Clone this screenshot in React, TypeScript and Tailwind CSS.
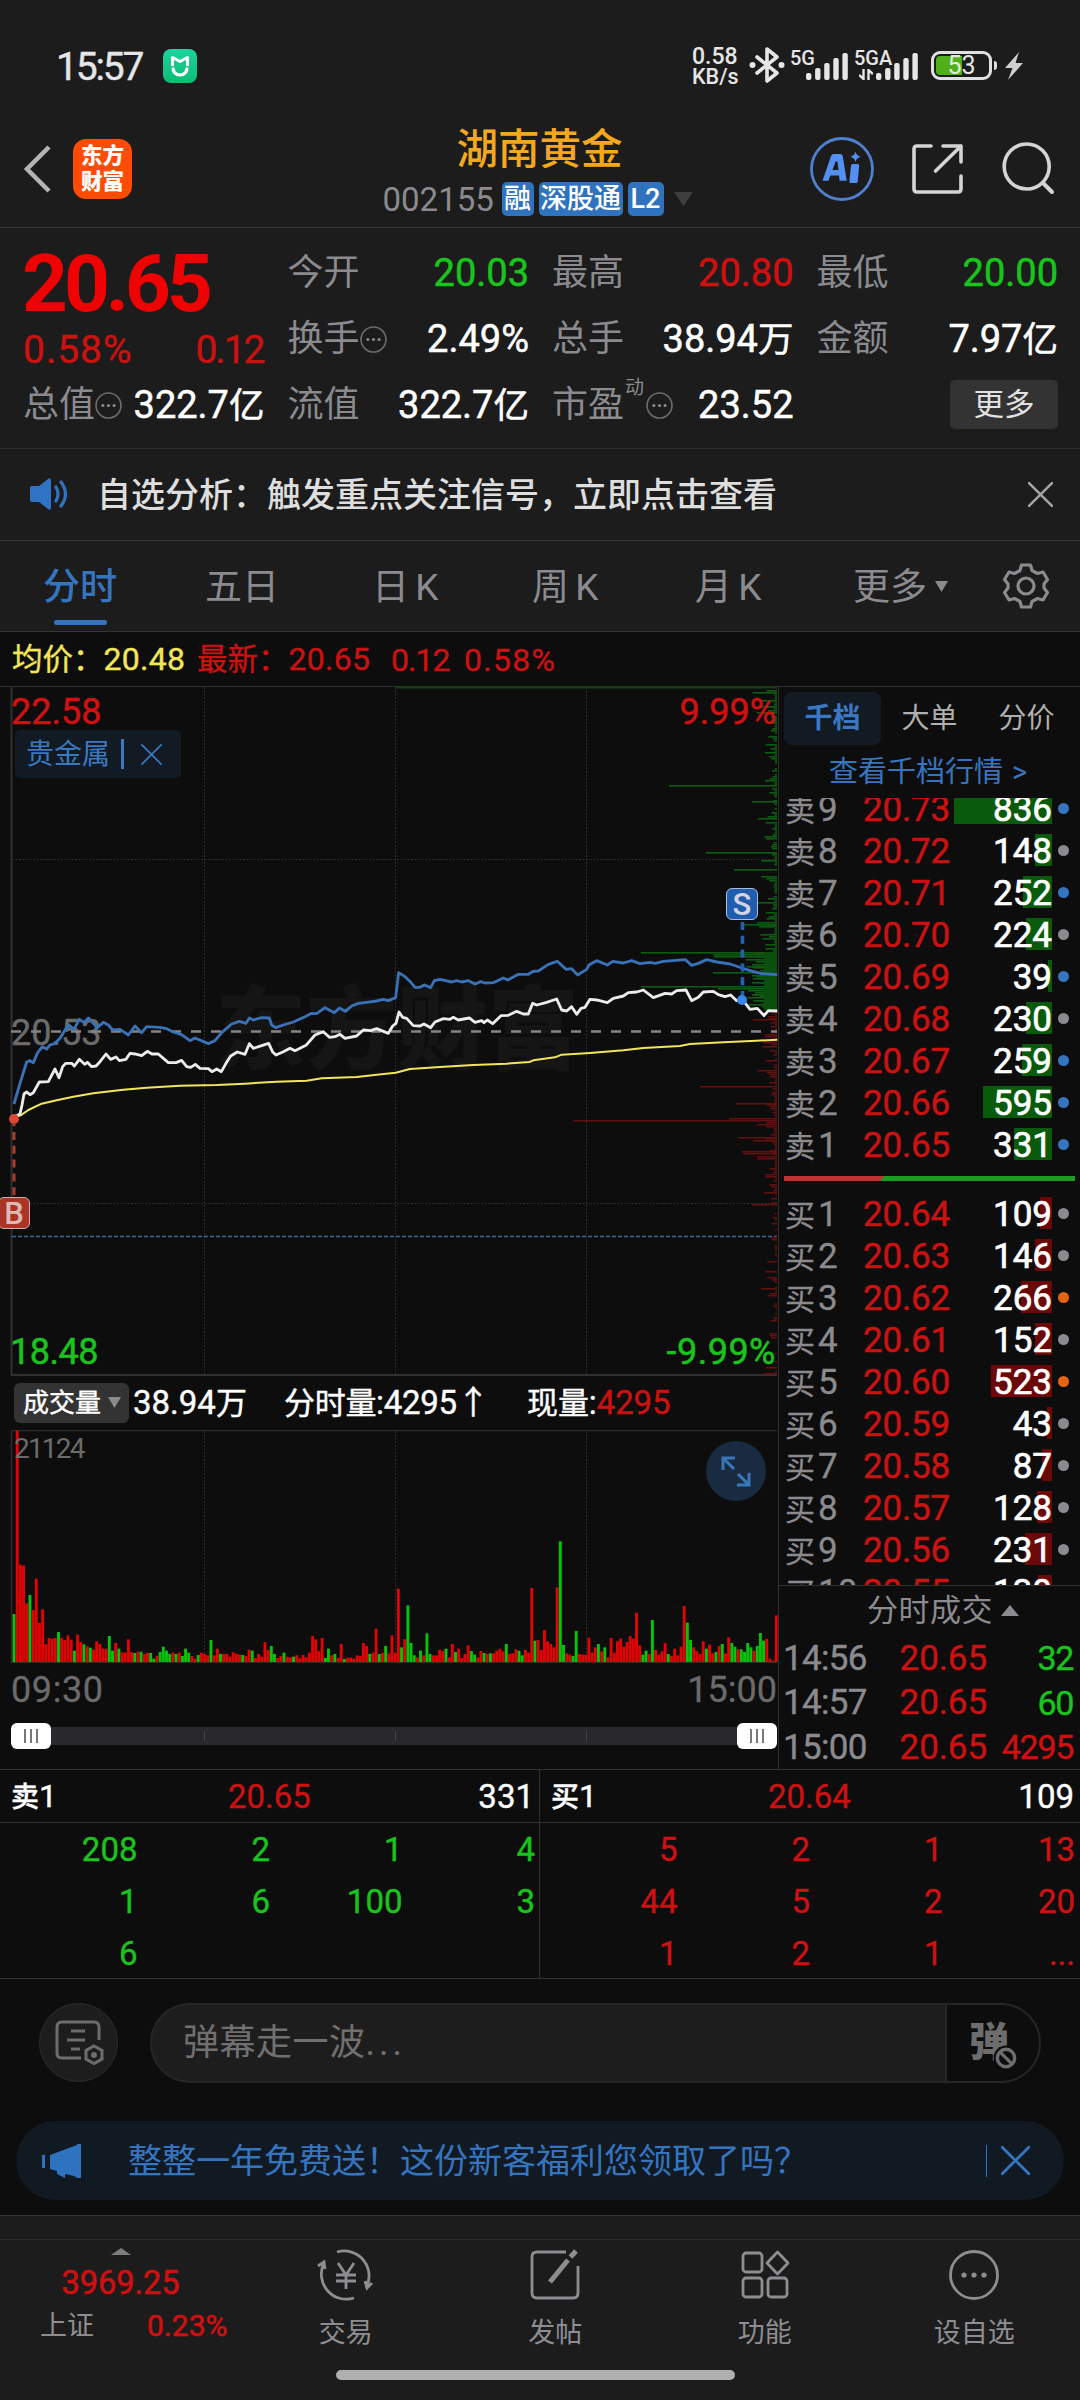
import React from "react";

const RED = "#d01010";
const GREEN = "#19c41c";
const BLUE = "#3575c0";

/* ---------- price chart data (thirds of a pixel, y from 920) ---------- */
const priceLine =
  "42,592 60,582 66,555 72,522 80,516 90,524 100,518 118,486 145,485 165,447 177,473 188,440 197,430 215,430 223,438 238,418 254,433 262,427 275,440 288,438 300,425 318,402 332,418 348,411 358,422 378,418 390,400 405,402 425,407 442,394 456,402 475,402 505,428 528,428 545,421 560,440 572,442 586,433 600,445 625,446 636,455 650,447 664,455 678,430 692,408 712,396 735,403 748,371 760,385 785,377 806,370 818,396 828,405 850,395 870,385 885,392 918,376 945,345 970,335 988,352 1005,350 1020,343 1035,355 1070,348 1090,330 1112,332 1130,326 1165,340 1178,318 1188,310 1197,276 1208,292 1220,295 1240,317 1260,318 1272,312 1292,323 1305,306 1330,296 1350,298 1360,292 1375,300 1408,294 1425,307 1445,302 1452,308 1462,300 1478,311 1503,287 1525,286 1550,274 1570,282 1585,282 1598,250 1610,255 1640,247 1670,237 1685,270 1700,273 1715,260 1730,283 1743,265 1755,262 1770,238 1790,240 1822,248 1840,235 1870,228 1885,218 1910,216 1930,210 1960,233 1995,220 2015,222 2030,212 2058,210 2075,242 2095,232 2110,216 2140,214 2155,224 2175,230 2192,225 2210,242 2226,242 2236,250 2250,268 2272,265 2292,287 2305,272 2332,273";
const sectorLine =
  "42,552 60,490 80,426 90,422 100,428 113,398 127,380 140,387 150,375 165,370 180,355 192,335 207,315 222,328 238,298 252,308 265,294 280,310 292,323 310,307 325,315 338,330 360,328 385,345 405,318 425,338 440,320 480,322 500,326 520,336 545,344 570,362 585,354 625,371 645,362 665,338 695,312 718,304 738,310 748,294 760,300 785,293 808,294 815,315 827,323 850,315 880,306 915,290 935,280 950,281 975,263 1003,278 1018,264 1036,274 1055,258 1075,250 1100,247 1130,243 1150,238 1165,242 1187,233 1196,158 1215,170 1228,182 1245,202 1260,202 1273,195 1292,203 1303,182 1320,178 1355,186 1370,182 1385,186 1405,182 1425,192 1442,185 1455,189 1480,188 1510,174 1523,180 1555,163 1585,163 1600,154 1615,153 1645,133 1672,124 1698,148 1715,146 1733,165 1760,148 1767,135 1790,122 1822,135 1838,124 1870,129 1895,122 1920,131 1950,127 1965,130 1990,124 2056,119 2075,136 2095,130 2120,119 2150,126 2190,132 2226,144 2250,152 2285,161 2332,164";
const averageLine =
  "42,592 62,586 85,570 125,551 170,541 220,530 280,520 370,509 440,503 540,497 650,495 735,491 830,485 920,482 965,475 1070,471 1130,464 1187,458 1230,447 1320,441 1420,435 1520,431 1588,426 1600,421 1665,412 1685,404 1770,399 1870,391 1930,384 2040,378 2070,372 2170,367 2270,362 2332,359";

/* order depth: [y, left edge] of the prominent levels */
const askDepth: [number, number][] = [
  [785, 669], [801, 752], [818, 758], [852, 706], [869, 734], [902, 758], [924, 742],
  [952, 641], [954, 713], [956, 714], [959, 746], [961, 756], [964, 752], [967, 753], [970, 760], [972, 713],
  [975, 752], [978, 753], [982, 752], [986, 641], [988, 718], [990, 748], [992, 755], [994, 752], [997, 747], [1000, 757], [1003, 763], [1006, 766],
];
const bidDepth: [number, number][] = [
  [1019, 753], [1070, 758], [1086, 700], [1103, 736], [1118, 729], [1120, 574], [1137, 738],
  [1140, 753], [1151, 742], [1153, 743], [1174, 765], [1204, 752], [1271, 765], [1288, 761], [1320, 770], [1367, 766], [1373, 764],
];

/* deterministic small depth ticks between two y values */
function ticks(from: number, to: number, seed: number, density: number, max: number): [number, number][] {
  const out: [number, number][] = [];
  let s = seed;
  for (let y = from; y < to; y += 2) {
    s = (s * 9301 + 49297) % 233280;
    const r = s / 233280;
    if (r < density) out.push([y, 775 - Math.pow(r / density, 3) * max]);
  }
  return out;
}
const askTicks = [
  ...ticks(690, 720, 11, 0.95, 26),
  ...ticks(720, 890, 7, 0.75, 14),
  ...ticks(890, 950, 3, 0.9, 18),
  ...ticks(950, 1010, 5, 1, 30),
];
const bidTicks = [
  ...ticks(1012, 1100, 9, 0.9, 14),
  ...ticks(1100, 1160, 4, 1, 22),
  ...ticks(1160, 1205, 21, 0.9, 12),
  ...ticks(1205, 1374, 13, 0.4, 8),
];

/* per-minute volume, third-pixel heights; a leading minus marks a falling minute */
const volumes = [
  -144, 694, 292, 289, 176, -201, 156, 250, 117, 158, 53, 72, 70, 72, -90, 73, 66, 80, 67, -34, 82, 60, -53, 47, -43, 37, 62, 54, 40, 40,
  -78, -34, 57, -40, 29, 28, 68, 30, -27, 31, -31, 24, 28, -27, -10, 18, -30, -46, -34, -24, 28, -24, 28, -18, -40, -28, 18, 10, -21, 28,
  24, 20, -66, 20, 40, -24, 24, 24, 16, 29, 25, 22, -21, 18, 37, -34, 12, 24, 16, 59, 36, -48, -24, 12, 18, -28, 16, 14, -16, 20,
  12, 21, 14, 28, 78, 68, 33, 72, -12, -40, 20, -24, 12, 54, -9, 13, 13, 10, 20, 18, 57, 48, -24, 28, 100, -24, 28, -48, 26, 80,
  28, 220, -44, 68, -170, -57, -20, 14, -34, 20, -86, -24, 20, 20, 37, 33, -40, 14, 54, -30, 40, 12, 24, 50, -33, -22, 14, 33, -27, 24,
  -26, 26, 34, 40, 32, -54, 24, 26, 38, -34, -20, 36, 28, 222, -64, 66, 36, 96, 62, 54, 44, 224, -362, -51, 26, 22, -18, -93, 24, 22,
  22, 73, 28, 44, -54, 32, -44, 14, 72, 28, 62, 70, 46, 60, 78, 70, 148, 50, -22, -34, 24, -126, 37, 22, 32, 57, -24, 18, 40, 20,
  46, 168, -118, -66, 44, 32, 24, 62, -40, 52, 26, -30, 48, -54, 26, 74, -57, -46, 38, -38, -30, -57, -44, 34, -48, -87, -64, 70, 10, 4, 140,
];

const gridX = [204.5, 395.5, 586.5];

/* ---------- small icons ---------- */
function Info() {
  return (
    <svg width="27" height="27" viewBox="0 0 26 26" className="shrink-0">
      <circle cx="13" cy="13" r="12" fill="none" stroke="#6a6a6d" strokeWidth="1.600" />
      <circle cx="7.600" cy="13" r="1.500" fill="#8b8b8f" />
      <circle cx="13" cy="13" r="1.500" fill="#8b8b8f" />
      <circle cx="18.400" cy="13" r="1.500" fill="#8b8b8f" />
    </svg>
  );
}

function Cross({ size, color, w }: { size: number; color: string; w: number }) {
  return (
    <svg width={size} height={size} viewBox="0 0 24 24">
      <path d="M1 1 23 23M23 1 1 23" stroke={color} strokeWidth={w} fill="none" strokeLinecap="round" />
    </svg>
  );
}

function Signal() {
  return (
    <svg width="42" height="27" viewBox="0 0 42 27">
      {[7, 12, 17, 22, 27].map((h, i) => (
        <rect key={h} x={i * 9.1} y={27 - h} width="5.400" height={h} rx="2" fill="#e6e6e6" />
      ))}
    </svg>
  );
}

/* ---------- sections ---------- */
function StatusBar() {
  return (
    <div className="flex h-[120px] items-start pl-[56px] pr-[57px] pt-[45px] text-[#e6e6e6]">
      <div className="flex h-[44px] w-[107px] items-center text-[39px] leading-[44px] tracking-[-2.200px] [-webkit-text-stroke:0.4px]">15:57</div>
      <svg width="34" height="34" viewBox="0 0 34 34" className="mt-1">
        <defs>
          <linearGradient id="mi" x1="0" y1="0" x2="0" y2="1">
            <stop offset="0" stopColor="#1ed2a0" />
            <stop offset="1" stopColor="#0cbd72" />
          </linearGradient>
        </defs>
        <rect width="34" height="34" rx="8" fill="url(#mi)" />
        <path d="M9.500 17V8.500L17 12.500 24.500 8.500V17" fill="none" stroke="#fff" strokeWidth="3" strokeLinejoin="round" />
        <path d="M9.800 18.500Q10.500 26 17 26T24.200 18.500" fill="none" stroke="#fff" strokeWidth="3" />
      </svg>
      <div className="grow" />
      <div className="flex w-[57px] flex-col pt-[2px] font-medium leading-[20px]">
        <span className="text-[23px]">0.58</span>
        <span className="text-[21.500px]">KB/s</span>
      </div>
      <svg width="36" height="38" viewBox="0 0 36 38" className="mt-px">
        <path d="M8 11 28 27 18 35V3L28 11 8 27" fill="none" stroke="#e6e6e6" strokeWidth="3.600" strokeLinejoin="round" strokeLinecap="round" />
        <circle cx="3.500" cy="19" r="3" fill="#e6e6e6" />
        <circle cx="32.500" cy="19" r="3" fill="#e6e6e6" />
      </svg>
      <div className="relative ml-[21px] mt-[8px]">
        <Signal />
        <span className="absolute -left-[16px] -top-[5px] text-[20px] font-medium leading-[20px]">5G</span>
      </div>
      <div className="relative ml-[28px] mt-[8px]">
        <Signal />
        <span className="absolute -left-[22px] -top-[5px] h-[18px] bg-[#1c1c1c] text-[20px] font-medium leading-[20px]">5GA</span>
        <svg width="14" height="11" viewBox="0 0 14 11" className="absolute -left-[17px] top-[16px]">
          <path d="M4.500 0V10L0 6M9.500 11V1L14 5" fill="none" stroke="#e6e6e6" strokeWidth="2.400" />
        </svg>
      </div>
      <div className="relative ml-[13px] mt-[6px] h-[29px] w-[61px] rounded-[9px] border-3 border-[#e0e0e0] p-[2px]">
        <div className="h-full w-[26px] rounded-l-[4px] bg-[#4fb01a]" />
        <span className="absolute inset-0 text-center text-[25px] leading-[24px]">53</span>
      </div>
      <div className="ml-[2px] mt-[16px] h-[9px] w-[3px] rounded-r bg-[#e0e0e0]" />
      <svg width="18" height="28" viewBox="0 0 18 28" className="ml-[8px] mt-[7px]">
        <path d="M14 0 0 16H7.500L3 28 18 11H10.500Z" fill="#cfcfcf" />
      </svg>
    </div>
  );
}

function Header() {
  const badge = "flex h-[34px] items-center justify-center rounded-[5px] bg-[#2f72bd] text-[27px] leading-none font-medium text-white";
  return (
    <div className="relative flex h-[108px] items-start border-b border-[#353535] px-[23px]">
      <svg width="30" height="50" viewBox="0 0 30 50" className="mt-[24px]">
        <path d="M26 3 4 25 26 47" fill="none" stroke="#b4b4b4" strokeWidth="4.500" />
      </svg>
      <div className="ml-[20px] mt-[19px] flex h-[60px] w-[59px] shrink-0 flex-col items-center justify-center rounded-[13px] bg-[#ff4c00] text-[21.500px] font-black leading-[26px] text-white">
        <span>东方</span>
        <span>财富</span>
      </div>
      <div className="flex grow flex-col items-center pl-[137px]">
        <div className="mt-[2px] h-[56px] text-center text-[41.500px] leading-[56px] font-medium whitespace-nowrap text-[#f5a81c]">湖南黄金</div>
        <div className="mt-[4px] flex h-[34px] items-center pr-[4px]">
          <span className="w-[119px] pt-[2px] text-[33px] leading-[34px] text-[#8b8b8f]">002155</span>
          <span className={badge + " w-[32px]"}>融</span>
          <span className={badge + " ml-[5px] w-[84px]"}>深股通</span>
          <span className={badge + " ml-[5px] w-[36px]"}>L2</span>
          <svg width="19" height="14" viewBox="0 0 19 14" className="ml-[10px]">
            <path d="M0 0H19L9.500 14Z" fill="#3e3e3e" />
          </svg>
        </div>
      </div>
      <svg width="64" height="64" viewBox="0 0 64 64" className="mt-[17px] shrink-0">
        <circle cx="32" cy="32" r="30.500" fill="none" stroke="#4e80cf" strokeWidth="2.800" />
        <g fill="#5390f2">
          <path fillRule="evenodd" d="M12.500 43.700 21 19Q22 17 24 17H30.500Q32.300 17 32.700 19L36.700 43.700H29.600L29 38.500H20.300L18.500 43.700ZM22.500 33H28.500L27.500 24.500H25.500Z" />
          <path d="M41 28.500Q41.200 27 42.600 27H47.500Q49.300 27 49.200 28.500L47.700 44.500Q47.500 46 46 46H41Q39.200 46 39.400 44.500Z" />
          <path d="M45.500 14.500Q46.500 18.700 50.700 19.700 46.500 20.700 45.500 25 44.500 20.700 40.300 19.700 44.500 18.700 45.500 14.500Z" />
        </g>
      </svg>
      <svg width="54" height="54" viewBox="0 0 54 54" className="ml-[37px] mt-[22px] shrink-0">
        <path d="M20 4H6Q3 4 3 7V47Q3 50 6 50H47Q50 50 50 47V34M32 4H50V20M50 4 24.500 29" fill="none" stroke="#d4d4d4" strokeWidth="3.600" strokeLinecap="round" strokeLinejoin="round" />
      </svg>
      <svg width="56" height="56" viewBox="0 0 56 56" className="ml-[36px] mt-[21px] shrink-0">
        <circle cx="25.700" cy="25.500" r="22.500" fill="none" stroke="#d4d4d4" strokeWidth="3.600" />
        <path d="M42 42 51 51" stroke="#d4d4d4" strokeWidth="4" strokeLinecap="round" />
      </svg>
    </div>
  );
}

function Stat({ label, value, color, icon, sup }: { label: string; value: string; color: string; icon?: boolean; sup?: string }) {
  return (
    <div className="flex h-[66px] items-center justify-between whitespace-nowrap">
      <span className="flex items-center text-[36px] text-[#8b8b8f]">
        {label}
        {sup && <span className="relative -top-[17px] ml-[1px] mr-[2px] text-[19px]">{sup}</span>}
        {icon && <Info />}
      </span>
      <span className="-mr-px text-[38px] leading-none [-webkit-text-stroke:0.5px]" style={{ color }}>
        {/[亿万]$/.test(value) ? (
          <>
            {value.slice(0, -1)}
            <span className="text-[35.500px]">{value.slice(-1)}</span>
          </>
        ) : (
          value
        )}
      </span>
    </div>
  );
}

function Quote() {
  return (
    <div className="grid h-[221px] grid-cols-4 gap-x-[24px] border-b border-[#303030] pl-[23px] pr-[23px] pt-[12px]">
      <div>
        <div className="-ml-[1px] h-[88px] text-[80px] leading-[88px] font-bold tracking-[-4px] text-[#ee0202]">20.65</div>
        <div className="mb-[-1px] flex h-[45px] items-center justify-between text-[39px] leading-none text-[#cc1111] [-webkit-text-stroke:0.4px]">
          <span className="tracking-[1px]">0.58%</span>
          <span className="tracking-[-2px]">0.12</span>
        </div>
        <Stat label="总值" icon value="322.7亿" color="#fff" />
      </div>
      <div>
        <Stat label="今开" value="20.03" color={GREEN} />
        <Stat label="换手" icon value="2.49%" color="#fff" />
        <Stat label="流值" value="322.7亿" color="#fff" />
      </div>
      <div>
        <Stat label="最高" value="20.80" color={RED} />
        <Stat label="总手" value="38.94万" color="#fff" />
        <Stat label="市盈" sup="动" icon value="23.52" color="#fff" />
      </div>
      <div>
        <Stat label="最低" value="20.00" color={GREEN} />
        <Stat label="金额" value="7.97亿" color="#fff" />
        <div className="-mr-px flex h-[66px] items-center justify-end">
          <div className="mb-px flex h-[49px] w-[108px] items-center justify-center rounded-[5px] bg-[#333333] text-[30.500px] text-[#e2e2e2]">更多</div>
        </div>
      </div>
    </div>
  );
}

function Notice() {
  return (
    <div className="flex h-[92px] items-center border-b border-[#353535] pl-[29px] pr-[27px]">
      <svg width="42" height="34" viewBox="0 0 42 34" className="-mt-[2px]">
        <path d="M3 9H10L19 2Q22 0 22 4V30Q22 34 19 32L10 25H3Q1 25 1 23V11Q1 9 3 9Z" fill="#2f74c4" />
        <path d="M27 10Q31 17 27 24M32 5Q41 17 32 29" fill="none" stroke="#2f74c4" strokeWidth="3.200" strokeLinecap="round" />
      </svg>
      <span className="ml-[26px] grow text-[34px] leading-[50px] font-medium text-[#dedede]">自选分析：触发重点关注信号，立即点击查看</span>
      <Cross size={25} color="#a5a5a5" w={2.4} />
    </div>
  );
}

function Tabs() {
  return (
    <div className="relative flex h-[91px] items-center border-b border-[#353535] text-[37px] leading-[88px] text-[#8b8b8f]">
      <div className="relative ml-[43px] w-[162px] pt-[3px] font-medium text-[#3575c0]">
        分时
        <div className="absolute bottom-[7px] left-[11px] h-[5px] w-[53px] rounded-full bg-[#3575c0]" />
      </div>
      <div className="w-[167px] pt-[3px]">五日</div>
      <div className="w-[160px] pt-[3px] [word-spacing:-3px]">日 K</div>
      <div className="w-[163px] pt-[3px] [word-spacing:-3px]">周 K</div>
      <div className="w-[158px] pt-[3px] [word-spacing:-3px]">月 K</div>
      <div className="flex w-[149px] items-center pt-[3px]">
        更多
        <svg width="13" height="11" viewBox="0 0 13 11" className="-mt-[2px] ml-[8px]">
          <path d="M0 0H13L6.500 11Z" fill="#8b8b8f" />
        </svg>
      </div>
      <svg width="48" height="48" viewBox="0 0 48 48" fill="none" stroke="#8b8b8f" strokeWidth="3.200" strokeLinejoin="round">
        <path d="M19.500 3H28.500L30 8.500 35.500 11.500 41 10 45.500 17.500 42 22V26L45.500 30.500 41 38 35.500 36.500 30 39.500 28.500 45H19.500L18 39.500 12.500 36.500 7 38 2.500 30.500 6 26V22L2.500 17.500 7 10 12.500 11.500 18 8.500Z" />
        <circle cx="24" cy="24" r="8" />
      </svg>
    </div>
  );
}

function PriceChart() {
  const label = "absolute text-[36px] leading-[40px] [-webkit-text-stroke:0.5px]";
  return (
    <div className="relative h-[689px]">
      <svg width="778" height="690" viewBox="0 686 778 690" className="absolute -top-px left-0">
        <path d="M11.500 686V1375.500M11 1375H777" stroke="#303030" strokeWidth="2" fill="none" />
        {gridX.map((x) => (
          <path key={x} d={`M${x} 687V1374`} stroke="#2e2e2e" strokeDasharray="2 1.500" />
        ))}
        <path d="M12 859.500H777M12 1203.500H777" stroke="#2e2e2e" strokeDasharray="2 1.500" />
        <path d="M12 1236.500H777" stroke="#3b668f" strokeWidth="1.500" strokeDasharray="4 2" />
        <path d="M395 687.500H777" stroke="#173d17" strokeWidth="2" />
        {[...askTicks, ...askDepth].map(([y, x], i) => (
          <rect key={i} x={x} y={y} width={777 - x} height="1.600" fill="#0e5c11" />
        ))}
        <rect x="764" y="952" width="13" height="58" fill="#0a500c" />
        {[...bidTicks, ...bidDepth].map(([y, x], i) => (
          <rect key={i} x={x} y={y} width={777 - x} height="1.500" fill="#651010" />
        ))}
      </svg>
      <div className="absolute left-[215px] top-[279px] text-[91px] leading-[130px] font-black whitespace-nowrap text-[#151515]">东方财富</div>
      <span className="absolute left-[11px] top-[326px] text-[36px] leading-[40px] text-[#6b6b6b] [-webkit-text-stroke:0.4px]">20.53</span>
      <svg width="778" height="690" viewBox="0 686 778 690" className="absolute -top-px left-0">
        <path d="M11 1031.500H777" stroke="#858585" strokeWidth="2.600" strokeDasharray="10 10" />
        <g transform="translate(0,920) scale(0.33333)" fill="none" strokeLinejoin="round">
          <polyline points={averageLine} stroke="#f0e55c" strokeWidth="6" />
          <polyline points={sectorLine} stroke="#3a72b8" strokeWidth="8.500" />
          <polyline points={priceLine} stroke="#ececec" strokeWidth="8.500" />
        </g>
        <path d="M14 1124V1197" stroke="#ae3a2a" strokeWidth="3" strokeDasharray="8 5.800" strokeDashoffset="-8" />
        <circle cx="14" cy="1119" r="5" fill="#dc4632" />
        <path d="M742.500 922V995" stroke="#2360b4" strokeWidth="3.600" strokeDasharray="8 5.800" />
        <circle cx="742" cy="1000" r="5" fill="#3686ee" />
      </svg>
      <span className={label + " left-[11px] top-[5px] text-[#d01111]"}>22.58</span>
      <span className={label + " right-[1px] top-[5px] text-[#d01111]"}>9.99%</span>
      <span className={label + " left-[10px] top-[645px] tracking-[-0.500px] text-[#19c41c]"}>18.48</span>
      <span className={label + " right-[1px] top-[645px] tracking-[0.500px] text-[#19c41c]"}>-9.99%</span>
      <div className="absolute left-[15px] top-[43px] flex h-[48px] w-[166px] items-center rounded-[5px] bg-[#121a23] pl-[11px] text-[28px] leading-none text-[#3a78c0]">
        <span className="pt-px">贵金属</span>
        <div className="ml-[11px] mr-[17px] h-[30px] w-[3px] bg-[#3a78c0]" />
        <Cross size={21} color="#3a78c0" w={2} />
      </div>
      <div className="absolute left-[726px] top-[201px] flex h-[32px] w-[32px] items-center justify-center rounded-[6px] border-[1.5px] border-[#a9bcd8] bg-[#225cae] pt-[1px] text-[31px] font-medium leading-none text-[#cfd6e2]">S</div>
      <div className="absolute -left-[2px] top-[510px] flex h-[32px] w-[32px] items-center justify-center rounded-[6px] border-[1.5px] border-[#cfb1ac] bg-[#ac3426] pt-[1px] text-[31px] font-medium leading-none text-[#ddb9b4]">B</div>
    </div>
  );
}

function VolumeChart() {
  return (
    <>
      <div className="flex h-[54px] items-center pb-px pl-[14px] text-[33px] leading-none whitespace-nowrap text-white [-webkit-text-stroke:0.4px]">
        <div className="flex h-[40px] w-[115px] items-center rounded-[6px] bg-[#333333] pl-[9px] text-[26px]">
          成交量
          <svg width="13" height="11" viewBox="0 0 13 11" className="ml-[7px]">
            <path d="M0 0H13L6.500 11Z" fill="#8b8b8f" />
          </svg>
        </div>
        <span className="ml-[4px] w-[151px]">38.94<span className="text-[31px]">万</span></span>
        <span className="w-[243px] tracking-[-0.300px]"><span className="text-[31px]">分时量</span>:4295↑</span>
        <span className="tracking-[-0.100px]"><span className="text-[31px]">现量</span>:<span className="text-[#cc1111]">4295</span></span>
      </div>
      <div className="relative h-[233px]">
        <svg width="778" height="233" viewBox="0 0 778 233" className="absolute left-0 top-0">
          <path d="M777 0.500H11.500V232.500H777" stroke="#2c2c2c" fill="none" strokeWidth="1.500" />
          {gridX.map((x) => (
            <path key={x} d={`M${x} 1V232`} stroke="#2e2e2e" strokeDasharray="2 1.500" />
          ))}
          {volumes.map((v, i) => (
            <rect key={i} x={12.6 + i * 3.176} y={232 - Math.abs(v) / 3} width="2.900" height={Math.abs(v) / 3} fill={v < 0 ? "#06c40a" : "#e00404"} />
          ))}
        </svg>
        <span className="absolute left-[14px] top-[3px] text-[28px] leading-[32px] tracking-[-1.800px] text-[#6b6b6b]">21124</span>
        <svg width="60" height="60" viewBox="0 0 60 60" className="absolute left-[706px] top-[11px]">
          <circle cx="30" cy="30" r="30" fill="#192b41" />
          <path d="M17 29V17H29M17 17 28 28M43 32V44H31M43 44 32 33" fill="none" stroke="#3a76ba" strokeWidth="3" />
        </svg>
      </div>
      <div className="flex h-[54px] items-center justify-between pl-[11px] text-[36px] text-[#6b6b6b] [-webkit-text-stroke:0.3px]">
        <span className="tracking-[0.600px]">09:30</span>
        <span>15:00</span>
      </div>
      <div className="flex h-[52px] pl-[11px] pt-[6px]">
        <Handle />
        <div className="relative mt-[4px] h-[18px] grow bg-[#29292b]">
          <div className="absolute left-[153px] top-[4px] h-[10px] w-px bg-[#454547]" />
          <div className="absolute left-[344px] top-[4px] h-[10px] w-px bg-[#454547]" />
          <div className="absolute left-[535px] top-[4px] h-[10px] w-px bg-[#454547]" />
        </div>
        <Handle />
      </div>
    </>
  );
}

function Handle() {
  return (
    <div className="flex h-[26px] w-[40px] items-center justify-center gap-[4px] rounded-[6px] bg-white">
      <div className="h-[14px] w-[2px] bg-[#777]" />
      <div className="h-[14px] w-[2px] bg-[#777]" />
      <div className="h-[14px] w-[2px] bg-[#777]" />
    </div>
  );
}

type Level = [string, string, string, number, string];
const GREY = "#8b8b8f";
const ORANGE = "#e5640f";
const asks: Level[] = [
  ["卖9", "20.73", "836", 98, BLUE],
  ["卖8", "20.72", "148", 17, GREY],
  ["卖7", "20.71", "252", 29, BLUE],
  ["卖6", "20.70", "224", 26, GREY],
  ["卖5", "20.69", "39", 4, BLUE],
  ["卖4", "20.68", "230", 26, GREY],
  ["卖3", "20.67", "259", 30, BLUE],
  ["卖2", "20.66", "595", 69, BLUE],
  ["卖1", "20.65", "331", 38, BLUE],
];
const bids: Level[] = [
  ["买1", "20.64", "109", 12, GREY],
  ["买2", "20.63", "146", 17, GREY],
  ["买3", "20.62", "266", 31, ORANGE],
  ["买4", "20.61", "152", 17, GREY],
  ["买5", "20.60", "523", 61, ORANGE],
  ["买6", "20.59", "43", 5, GREY],
  ["买7", "20.58", "87", 10, GREY],
  ["买8", "20.57", "128", 15, GREY],
  ["买9", "20.56", "231", 27, GREY],
  ["买10", "20.55", "130", 14, GREY],
];

function LevelRow({ level, bar }: { level: Level; bar: string }) {
  const [name, price, vol, width, dot] = level;
  return (
    <div className="flex h-[42px] shrink-0 items-center pl-[6px] text-[35px] leading-none whitespace-nowrap">
      <span className="w-[71px] pt-[2px] text-[#8b8b8f] [-webkit-text-stroke:0.3px]">
        <span className="mr-[3px] text-[30px]">{name[0]}</span>
        {name.slice(1)}
      </span>
      <span className="w-[94px] pt-[3px] text-right tracking-[-0.200px] text-[#cc1111] [-webkit-text-stroke:0.5px]">{price}</span>
      <div className="relative ml-[4px] flex h-[32px] w-[98px] items-center justify-end">
        <div className="absolute right-0 top-0 h-full" style={{ width, backgroundColor: bar }} />
        <span className="relative pt-[3px] text-white [-webkit-text-stroke:0.7px]">{vol}</span>
      </div>
      <div className="ml-[6px] h-[11px] w-[11px] rounded-full" style={{ backgroundColor: dot }} />
    </div>
  );
}

const trades: [string, string, string, string][] = [
  ["14:56", "20.65", "32", GREEN],
  ["14:57", "20.65", "60", GREEN],
  ["15:00", "20.65", "4295", RED],
];

function OrderBook() {
  return (
    <div className="flex w-[302px] flex-col border-l border-[#303030]">
      <div className="flex h-[60px] items-center pl-[5px] text-[28px] text-[#b0b0b0]">
        <div className="mt-[3px] flex h-[53px] w-[97px] items-center justify-center rounded-[8px] bg-[#121a23] font-bold text-[#3a78c4]">千档</div>
        <span className="w-[97px] pt-[3px] text-center">大单</span>
        <span className="w-[97px] pt-[3px] text-center">分价</span>
      </div>
      <div className="flex h-[51px] items-center pl-[50px] text-[29px] leading-none text-[#3575c0]">
        查看千档行情<span className="ml-[9px]">&gt;</span>
      </div>
      <div className="flex h-[367px] flex-col justify-end overflow-hidden">
        {asks.map((l) => (
          <LevelRow key={l[0]} level={l} bar="#0a5a0c" />
        ))}
      </div>
      <div className="ml-[5px] mt-[11px] h-[5px] w-[291px] bg-[linear-gradient(120deg,#be3434_0_34%,#1f9a20_34%)]" />
      <div className="mt-[11px] h-[394px] overflow-hidden border-b border-[#303030]">
        {bids.map((l) => (
          <LevelRow key={l[0]} level={l} bar="#6b0909" />
        ))}
      </div>
      <div className="flex h-[49px] items-center pl-[88px] pt-[2px] text-[31px] tracking-[0.500px] text-[#8b8b8f]">
        分时成交
        <svg width="18" height="11" viewBox="0 0 18 11" className="-mt-[2px] ml-[8px]">
          <path d="M9 0 18 11H0Z" fill="#8b8b8f" />
        </svg>
      </div>
      {trades.map(([t, p, v, c]) => (
        <div key={t} className="flex h-[44.500px] items-center pl-[4px] pr-[7px] pt-[2px] text-[35px] leading-none [-webkit-text-stroke:0.4px]">
          <span className="w-[113px] tracking-[-0.700px] text-[#8b8b8f]">{t}</span>
          <span className="w-[91px] text-right tracking-[-0.100px] text-[#cc1111]">{p}</span>
          <span className="grow text-right text-[34px] tracking-[-1.300px]" style={{ color: c }}>
            {v}
          </span>
        </div>
      ))}
    </div>
  );
}

function Queue({ name, price, total, items, tone }: { name: string; price: string; total: string; items: string[]; tone: string }) {
  return (
    <div className="w-[540px] text-[33px] leading-none [-webkit-text-stroke:0.4px]">
      <div className="flex h-[53px] items-center border-b border-[#303030] pl-[11px] pr-[6px] text-white">
        <span className="w-[217px] text-[32px]">
          <span className="text-[28px] font-medium">{name[0]}</span>
          {name.slice(1)}
        </span>
        <span className="text-[#cc1111]">{price}</span>
        <span className="grow text-right">{total}</span>
      </div>
      <div className="grid h-[156px] grid-cols-4 grid-rows-3 items-center pl-[5px] pr-[5px] text-right" style={{ color: tone }}>
        {items.map((v, i) => (
          <span key={i}>{v}</span>
        ))}
      </div>
    </div>
  );
}

function Danmu() {
  return (
    <div className="flex h-[128px] items-center pb-[1px] pl-[39px]">
      <div className="flex h-[79px] w-[79px] items-center justify-center rounded-full border border-[#2c2c2c] bg-[#1d1d1d]">
        <svg width="50" height="46" viewBox="0 0 50 46" fill="none" stroke="#6d6d6d" strokeWidth="3">
          <path d="M27 38H8Q3 38 3 33V7Q3 2 8 2H40Q45 2 45 7V20M17 11H31M13 20H31M17 29H26" />
          <path d="M40 26 48 30.500V39L40 43.500 32 39V30.500Z" />
          <circle cx="40" cy="35" r="1.500" />
        </svg>
      </div>
      <div className="ml-[32px] flex h-[80px] w-[891px] items-center overflow-hidden rounded-full border-2 border-[#262626] bg-[#1d1d1d]">
        <span className="flex h-full grow items-center pl-[31px] text-[36px] text-[#707070]">
          <span className="tracking-[0.500px]">弹幕走一波</span>
          <span className="tracking-[4px]">...</span>
        </span>
        <div className="relative flex h-full w-[94px] items-center border-l-2 border-[#262626] bg-[#0d0d0d] pl-[22px] text-[40px] font-black text-[#6d6d6d]">
          弹
          <svg width="26" height="26" viewBox="0 0 24 24" className="absolute left-[46px] top-[40px]">
            <circle cx="12" cy="12" r="11.500" fill="#0d0d0d" />
            <circle cx="12" cy="12" r="8" fill="none" stroke="#6d6d6d" strokeWidth="3.200" />
            <path d="M7 7 17 17" stroke="#6d6d6d" strokeWidth="3" />
          </svg>
        </div>
      </div>
    </div>
  );
}

function Promo() {
  return (
    <div className="mx-[16px] mt-[14px] flex h-[79px] items-center rounded-full bg-[#111a23] pl-[25px] pr-[34px] text-[34px] text-[#3575c0]">
      <svg width="42" height="36" viewBox="0 0 42 36">
        <path d="M9 12 36 2V1H40V35H36L33 33 24 31V35L16 31V28L9 26Z" fill="#2f72be" />
        <path d="M2.500 12V25" stroke="#2f72be" strokeWidth="3" />
      </svg>
      <span className="ml-[45px] grow leading-[50px] whitespace-nowrap">整整一年免费送！这份新客福利您领取了吗？</span>
      <div className="h-[32px] w-px bg-[#3575c0]" />
      <div className="ml-[14px]">
        <Cross size={29} color="#3575c0" w={2.4} />
      </div>
    </div>
  );
}

function NavItem({ label, children }: { label: string; children: React.ReactNode }) {
  return (
    <div className="flex w-[209.500px] flex-col items-center">
      <svg width="58" height="54" viewBox="0 0 58 54" fill="none" stroke="#8e8e92" strokeWidth="2.800" className="mt-[8px]">
        {children}
      </svg>
      <span className="mt-[11px] text-[27px] leading-[40px] text-[#8e8e92]">{label}</span>
    </div>
  );
}

function BottomNav() {
  return (
    <div className="h-[185px] border-t border-[#353535] bg-[#1c1c1c]">
      <div className="mt-[23px] flex border-t border-[#292929]">
        <div className="flex w-[241px] flex-col items-center text-[#d01010]">
          <svg width="20" height="7" viewBox="0 0 20 7" className="mt-[8px]">
            <path d="M10 0 20 7H0Z" fill="#7d7d80" />
          </svg>
          <span className="mt-[10px] text-[32.500px] leading-[36px] [-webkit-text-stroke:0.6px]">3969.25</span>
          <div className="mt-[6px] flex w-full items-center pl-[40px] leading-[38px]">
            <span className="w-[107px] text-[27px] text-[#8e8e92]">上证</span>
            <span className="text-[30px] [-webkit-text-stroke:0.6px]">0.23%</span>
          </div>
        </div>
        <NavItem label="交易">
          <path d="M21 4A25 25 0 0 1 50 40M38 50A25 25 0 0 1 8 15M2 18 8 14 9 21M56 35 51 40 49 33" transform="translate(-1 0)" />
          <path d="M21 15 29 27 37 15M19 27H39M19 33H39M29 27V41" />
        </NavItem>
        <NavItem label="发帖">
          <path d="M40 4H11Q6 4 6 9V45Q6 50 11 50H47Q52 50 52 45V18" />
          <path d="M24 34 42 12M44.500 9 50 3" strokeWidth="5" />
        </NavItem>
        <NavItem label="功能">
          <rect x="7" y="5" width="19" height="19" rx="3" />
          <rect x="7" y="30" width="19" height="19" rx="3" />
          <rect x="32" y="30" width="19" height="19" rx="3" />
          <path d="M41.500 4 52 15 41.500 26 31 15Z" strokeLinejoin="round" />
        </NavItem>
        <NavItem label="设自选">
          <circle cx="29" cy="27" r="23.500" />
          <g fill="#8e8e92" stroke="none">
            <circle cx="19" cy="27" r="2.600" />
            <circle cx="29" cy="27" r="2.600" />
            <circle cx="39" cy="27" r="2.600" />
          </g>
        </NavItem>
      </div>
      <div className="ml-[336px] mt-[17px] h-[10px] w-[399px] rounded-full bg-[#b0b0b0]" />
    </div>
  );
}

export default function App() {
  return (
    <div className="h-[2400px] w-[1080px] overflow-hidden bg-[#0d0d0d] [font-family:Roboto,'Noto_Sans_CJK_SC',sans-serif]">
      <div className="bg-[#1c1c1c]">
        <StatusBar />
        <Header />
        <Quote />
        <Notice />
        <Tabs />
      </div>
      <div className="flex h-[55px] items-center border-b border-[#303030] pl-[12px] pt-[1px] text-[32px] leading-none whitespace-nowrap text-[#cc1111] [-webkit-text-stroke:0.4px]">
        <span className="w-[185px] text-[#f2e65a]"><span className="text-[30.500px]">均价：</span><span className="tracking-[0.300px]">20.48</span></span>
        <span className="w-[194px]"><span className="text-[30.500px]">最新：</span><span className="tracking-[0.300px]">20.65</span></span>
        <span className="w-[73px] tracking-[-1px]">0.12</span>
        <span className="tracking-[1.300px]">0.58%</span>
      </div>
      <div className="flex h-[1082px]">
        <div className="w-[778px] pr-[1px]">
          <PriceChart />
          <VolumeChart />
        </div>
        <OrderBook />
      </div>
      <div className="flex h-[210px] border-y border-[#353535]">
        <Queue name="卖1" price="20.65" total="331" tone={GREEN} items={["208", "2", "1", "4", "1", "6", "100", "3", "6"]} />
        <div className="-ml-px w-px bg-[#303030]" />
        <Queue name="买1" price="20.64" total="109" tone={RED} items={["5", "2", "1", "13", "44", "5", "2", "20", "1", "2", "1", "..."]} />
      </div>
      <Danmu />
      <Promo />
      <div className="h-[15px]" />
      <BottomNav />
    </div>
  );
}
